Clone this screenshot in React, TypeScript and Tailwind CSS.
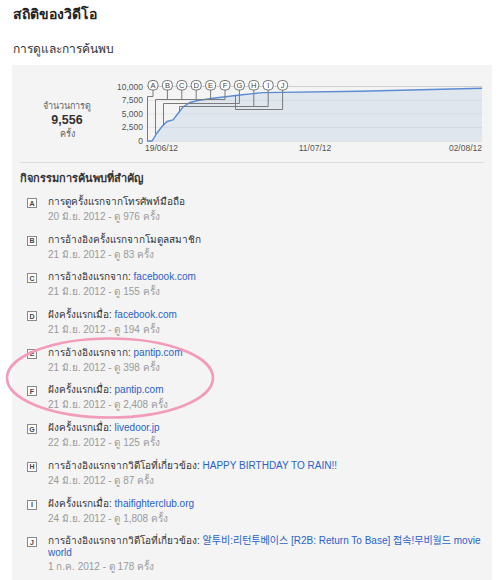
import React from "react";

type Item = { l: string; label: string; link?: string; link2?: string; date: string };

const items: Item[] = [
  { l: "A", label: "การดูครั้งแรกจากโทรศัพท์มือถือ", date: "20 มิ.ย. 2012 - ดู 976 ครั้ง" },
  { l: "B", label: "การอ้างอิงครั้งแรกจากโมดูลสมาชิก", date: "21 มิ.ย. 2012 - ดู 83 ครั้ง" },
  { l: "C", label: "การอ้างอิงแรกจาก:", link: "facebook.com", date: "21 มิ.ย. 2012 - ดู 155 ครั้ง" },
  { l: "D", label: "ฝังครั้งแรกเมื่อ:", link: "facebook.com", date: "21 มิ.ย. 2012 - ดู 194 ครั้ง" },
  { l: "E", label: "การอ้างอิงแรกจาก:", link: "pantip.com", date: "21 มิ.ย. 2012 - ดู 398 ครั้ง" },
  { l: "F", label: "ฝังครั้งแรกเมื่อ:", link: "pantip.com", date: "21 มิ.ย. 2012 - ดู 2,408 ครั้ง" },
  { l: "G", label: "ฝังครั้งแรกเมื่อ:", link: "livedoor.jp", date: "22 มิ.ย. 2012 - ดู 125 ครั้ง" },
  { l: "H", label: "การอ้างอิงแรกจากวิดีโอที่เกี่ยวข้อง:", link: "HAPPY BIRTHDAY TO RAIN!!", date: "24 มิ.ย. 2012 - ดู 87 ครั้ง" },
  { l: "I", label: "ฝังครั้งแรกเมื่อ:", link: "thaifighterclub.org", date: "24 มิ.ย. 2012 - ดู 1,808 ครั้ง" },
  {
    l: "J",
    label: "การอ้างอิงแรกจากวิดีโอที่เกี่ยวข้อง:",
    link: "알투비:리턴투베이스 [R2B: Return To Base] 접속!무비월드 movie",
    link2: "world",
    date: "1 ก.ค. 2012 - ดู 178 ครั้ง",
  },
];

const curve: [number, number][] = [
  [147, 141],
  [152, 141],
  [157, 133],
  [162, 126.5],
  [167, 121.5],
  [173, 120],
  [178, 113.5],
  [183, 107],
  [190, 102.5],
  [198, 100.5],
  [213, 98.3],
  [240, 95],
  [263, 92.6],
  [360, 91.3],
  [482, 88.3],
];

function Chart() {
  const line = curve.map((p) => p.join(",")).join(" ");
  const area = `147,141 ${line} 482,141`;
  const letters = ["A", "B", "C", "D", "E", "F", "G", "H", "I", "J"];
  const cx = (i: number) => 153 + i * 14.4;
  const stroke = "#7a7a7a";
  return (
    <svg width={382} height={97} className="block shrink-0" style={{ fontFamily: '"Liberation Sans", Arial, sans-serif' }}>
      <g transform="translate(-110,-65)">
        <rect x={147} y={86} width={335} height={55} fill="#f4f4f4" />
        <polygon points={area} fill="#dfe6ee" />
        {[100, 113.5, 127].map((y) => (
          <line key={y} x1={147} x2={482} y1={y + 0.5} y2={y + 0.5} stroke="#000" strokeOpacity={0.05} />
        ))}
        <line x1={147} x2={482} y1={86.5} y2={86.5} stroke="#cfcfcf" />
        <line x1={147} x2={482} y1={141.5} y2={141.5} stroke="#e2e2e2" />
        <polyline points={line} fill="none" stroke="#5b8bd2" strokeWidth={1.4} />
        {[
          ["10,000", 89.5],
          ["7,500", 103],
          ["5,000", 116.5],
          ["2,500", 130],
          ["0", 144],
        ].map(([t, y]) => (
          <text key={t as string} x={143} y={y as number} textAnchor="end" fontSize={8.5} fill="#555">
            {t}
          </text>
        ))}
        <text x={145} y={151} fontSize={8.5} fill="#555">19/06/12</text>
        <text x={315} y={151} fontSize={8.5} fill="#555" textAnchor="middle">11/07/12</text>
        <text x={482} y={151} fontSize={8.5} fill="#555" textAnchor="end">02/08/12</text>

        <g fill="none" stroke={stroke} strokeWidth={1}>
          <polyline points={`${cx(0)},90 ${cx(0)},96.5 147.5,96.5 147.5,141`} />
          {[1, 2, 3, 4, 5].map((i) => (
            <line key={i} x1={cx(i)} x2={cx(i)} y1={90} y2={99.5} />
          ))}
          <polyline points={`${cx(5)},99.5 155.5,99.5 155.5,134`} />
          <polyline points={`${cx(6)},90 ${cx(6)},103.5 163.5,103.5 163.5,126`} />
          <line x1={cx(7)} x2={cx(7)} y1={90} y2={106.5} />
          <polyline points={`${cx(8)},90 ${cx(8)},106.5 179.5,106.5 179.5,112`} />
          <polyline points={`${cx(9)},90 ${cx(9)},109.5 235.5,109.5 235.5,95.5`} />
        </g>
        {letters.map((l, i) => (
          <g key={l}>
            <rect x={cx(i) - 5} y={80.5} width={10} height={9.5} rx={4} fill="#fff" stroke="#777" />
            <text x={cx(i)} y={88} fontSize={7.5} textAnchor="middle" fill="#444">
              {l}
            </text>
          </g>
        ))}
      </g>
    </svg>
  );
}

export default function App() {
  return (
    <div
      className="relative w-[504px] h-[580px] overflow-hidden bg-white text-[#333]"
      style={{ fontFamily: 'Tahoma, "Liberation Sans", "DejaVu Sans", "Noto Sans", "Noto Sans CJK KR", sans-serif' }}
    >
      <div className="pl-[13px] pt-[5px] text-[14px] leading-[18px] font-bold text-[#222]">สถิติของวิดีโอ</div>
      <div className="pl-[13px] mt-[18px] text-[12px] leading-[16px] text-[#333]">การดูและการค้นพบ</div>
      <div className="mx-[12px] mt-[8px] bg-[#f4f4f4] pb-[40px]">
        <div className="flex h-[97px]">
          <div className="w-[98px] shrink-0 pl-[12px] pt-[35px] flex flex-col items-center">
            <div className="text-[9px] leading-[13px] text-[#666]">จำนวนการดู</div>
            <div className="text-[12.5px] leading-[15px] font-bold text-[#333]">9,556</div>
            <div className="text-[9px] leading-[13px] text-[#666]">ครั้ง</div>
          </div>
          <Chart />
        </div>
        <div className="mx-[8px] border-t border-[#dcdcdc]" />
        <div className="pl-[8px] pt-[7px] text-[11px] leading-[16px] font-bold text-[#333]">กิจกรรมการค้นพบที่สำคัญ</div>
        <div className="pl-[15px] pt-[8px] flex flex-col gap-[7.7px]">
          {items.map((it) => (
            <div key={it.l} className="flex">
              <div className="mt-[4px] mr-[11px] w-[10px] h-[10px] shrink-0 border border-[#8a8a8a] bg-white flex items-center justify-center text-[7px] leading-none font-bold text-[#444]">
                {it.l}
              </div>
              <div className="min-w-0">
                <div className="text-[10px] leading-[15px] text-[#333] whitespace-nowrap">
                  {it.label}
                  {it.link && (
                    <>
                      {" "}
                      <span className="text-[#2b62c8]">{it.link}</span>
                    </>
                  )}
                </div>
                {it.link2 && <div className="text-[10px] leading-[9px] pb-[2px] text-[#2b62c8]">{it.link2}</div>}
                <div className="text-[10px] leading-[15px] text-[#9a9a9a]">{it.date}</div>
              </div>
            </div>
          ))}
        </div>
      </div>
      <svg className="absolute left-0 top-0 pointer-events-none" width={504} height={580}>
        <ellipse cx={110} cy={378} rx={103} ry={39.5} fill="none" stroke="#f29bba" strokeWidth={2.6} />
      </svg>
    </div>
  );
}
